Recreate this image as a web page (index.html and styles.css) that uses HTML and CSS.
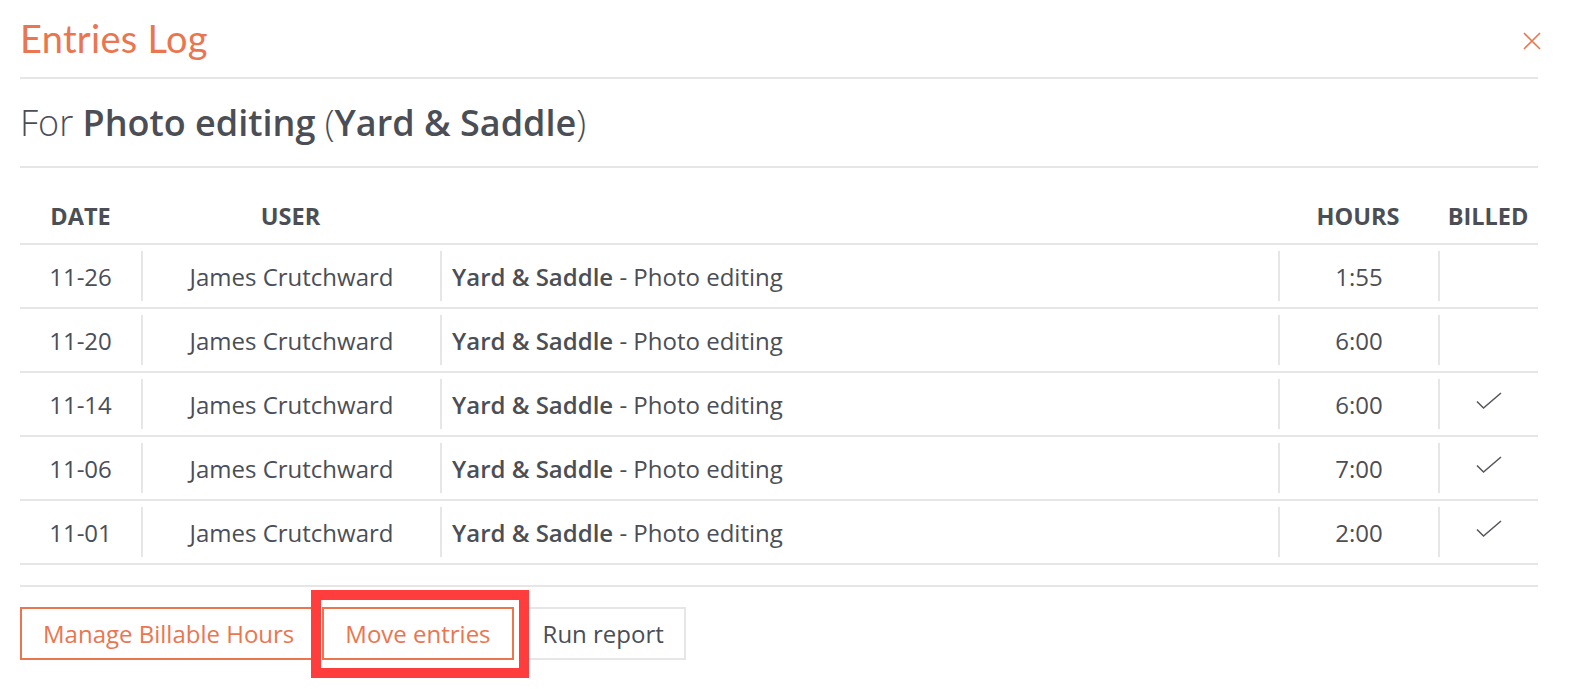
FILE: index.html
```html
<!DOCTYPE html>
<html lang="en">
<head>
<meta charset="utf-8">
<title>Entries Log</title>
<link rel="stylesheet" href="styles.css">
</head>
<body>
<div class="modal">
  <header class="modal-head">
    <h1 class="title">Entries Log</h1>
    <button class="close" aria-label="Close">
      <svg width="18" height="18" viewBox="0 0 18 18"><path d="M1 1L17 17M17 1L1 17" stroke="#ea7650" stroke-width="1.6" fill="none"/></svg>
    </button>
  </header>
  <div class="subtitle">For <b>Photo editing</b> (<b>Yard &amp; Saddle</b>)</div>
  <div class="table">
    <div class="row head">
      <div class="c">DATE</div>
      <div class="c">USER</div>
      <div class="c"></div>
      <div class="c">HOURS</div>
      <div class="c">BILLED</div>
    </div>
    <div class="row">
      <div class="c">11-26</div>
      <div class="c">James Crutchward</div>
      <div class="c desc"><b>Yard &amp; Saddle</b>&nbsp;- Photo editing</div>
      <div class="c">1:55</div>
      <div class="c"></div>
    </div>
    <div class="row">
      <div class="c">11-20</div>
      <div class="c">James Crutchward</div>
      <div class="c desc"><b>Yard &amp; Saddle</b>&nbsp;- Photo editing</div>
      <div class="c">6:00</div>
      <div class="c"></div>
    </div>
    <div class="row">
      <div class="c">11-14</div>
      <div class="c">James Crutchward</div>
      <div class="c desc"><b>Yard &amp; Saddle</b>&nbsp;- Photo editing</div>
      <div class="c">6:00</div>
      <div class="c"><svg class="check" width="26" height="18" viewBox="0 0 26 18"><path d="M1 9.5L7.5 16L25 1" stroke="#55585e" stroke-width="1.6" fill="none"/></svg></div>
    </div>
    <div class="row">
      <div class="c">11-06</div>
      <div class="c">James Crutchward</div>
      <div class="c desc"><b>Yard &amp; Saddle</b>&nbsp;- Photo editing</div>
      <div class="c">7:00</div>
      <div class="c"><svg class="check" width="26" height="18" viewBox="0 0 26 18"><path d="M1 9.5L7.5 16L25 1" stroke="#55585e" stroke-width="1.6" fill="none"/></svg></div>
    </div>
    <div class="row">
      <div class="c">11-01</div>
      <div class="c">James Crutchward</div>
      <div class="c desc"><b>Yard &amp; Saddle</b>&nbsp;- Photo editing</div>
      <div class="c">2:00</div>
      <div class="c"><svg class="check" width="26" height="18" viewBox="0 0 26 18"><path d="M1 9.5L7.5 16L25 1" stroke="#55585e" stroke-width="1.6" fill="none"/></svg></div>
    </div>
  </div>
  <div class="actions">
    <button class="btn btn-orange">Manage Billable Hours</button>
    <span class="highlight-wrap">
      <button class="btn btn-orange">Move entries</button>
      <span class="highlight"></span>
    </span>
    <button class="btn btn-plain">Run report</button>
  </div>
</div>
</body>
</html>
```

FILE: styles.css
```css
html, body {
  margin: 0;
  padding: 0;
  background: #ffffff;
}
body {
  font-family: "Open Sans", "Liberation Sans", sans-serif;
  color: #4b4e55;
}
.modal {
  padding: 0 34px 29px 20px;
}
.modal-head {
  height: 77px;
  border-bottom: 2px solid #e6e6e6;
  display: flex;
  align-items: center;
  justify-content: space-between;
}
.title {
  margin: 0;
  font-family: "Lato", "Noto Sans", sans-serif;
  font-weight: 400;
  font-size: 38px;
  color: #ea7650;
  letter-spacing: 0.3px;
  padding-bottom: 2px;
}
.close {
  background: none;
  border: 0;
  padding: 0;
  margin-right: -3px;
  margin-top: 4px;
  display: flex;
  cursor: pointer;
}
.subtitle {
  height: 87px;
  border-bottom: 2px solid #e6e6e6;
  display: flex;
  align-items: center;
  font-size: 36px;
  font-weight: 300;
  white-space: pre;
}
.subtitle b {
  font-weight: 600;
}
.row {
  display: grid;
  grid-template-columns: 121px 299px 1fr 160px 100px;
  height: 50px;
  padding: 6px 0;
  border-bottom: 2px solid #e6e6e6;
  font-size: 24px;
}
.row .c {
  display: flex;
  align-items: center;
  justify-content: center;
  border-left: 2px solid #e6e6e6;
  white-space: nowrap;
}
.row .c:first-child {
  border-left: 0;
}
.row .c.desc {
  justify-content: flex-start;
  padding-left: 10px;
}
.row .c.desc b {
  font-weight: 600;
}
.row.head {
  height: 75px;
  padding: 0;
  font-size: 23.5px;
  font-weight: 700;
}
.row.head .c {
  border-left: 0;
  padding-top: 20px;
}
.check {
  margin-top: -6px;
}
.actions {
  margin-top: 20px;
  border-top: 2px solid #e6e6e6;
  padding-top: 20px;
  display: flex;
  gap: 5px;
}
.btn {
  height: 53px;
  font-family: "Open Sans", "Liberation Sans", sans-serif;
  font-size: 24px;
  padding: 0 21px;
  background: #fff;
  cursor: pointer;
}
.btn-orange {
  border: 2px solid #ea7650;
  color: #ea7650;
}
.btn-plain {
  border: 2px solid #e6e6e6;
  color: #4b4e55;
  padding: 0 20px 0 22px;
}
.highlight-wrap {
  position: relative;
  display: flex;
}
.highlight {
  position: absolute;
  left: -11px;
  right: -15px;
  top: -17px;
  bottom: -18px;
  border: 10px solid #ff3d3d;
  pointer-events: none;
}
```
